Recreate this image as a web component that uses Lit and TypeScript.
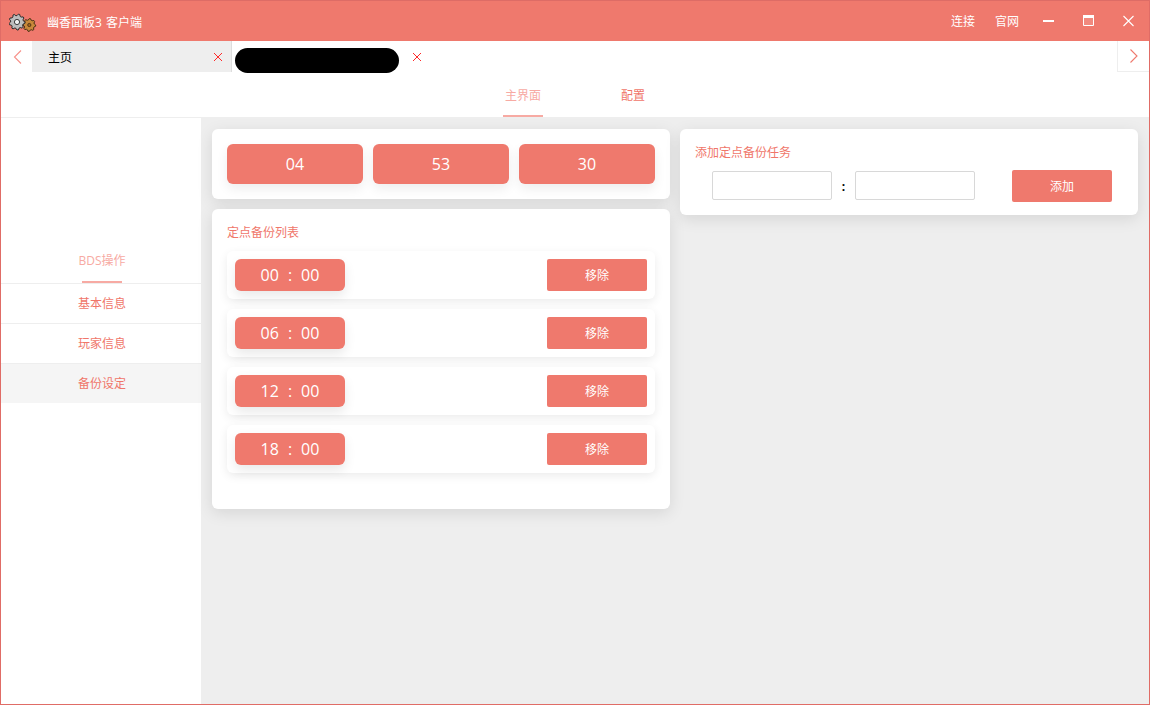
import { LitElement, html, css, svg } from "lit";
import { customElement } from "lit/decorators.js";

const gear = (cx: number, cy: number, r: number, teeth: number, fill: string, dark: string, hole: string, holeR: number) => {
  const pts: string[] = [];
  const n = teeth * 4;
  for (let i = 0; i < n; i++) {
    const a = (i / n) * Math.PI * 2;
    const rr = i % 4 < 2 ? r : r * 0.8;
    pts.push(`${(cx + Math.cos(a) * rr).toFixed(2)},${(cy + Math.sin(a) * rr).toFixed(2)}`);
  }
  return svg`<polygon points=${pts.join(" ")} fill=${fill} stroke=${dark} stroke-width="1"/><circle cx=${cx} cy=${cy} r=${holeR} fill=${hole} stroke=${dark} stroke-width="0.9"/>`;
};

@customElement("app-root")
export class AppRoot extends LitElement {
  static styles = css`
    :host {
      display: block;
      width: 1150px;
      height: 705px;
      font-family: "Open Sans", "Noto Sans CJK SC", sans-serif;
      font-size: 12px;
      color: #f0766a;
      overflow: hidden;
    }
    * { box-sizing: border-box; }
    .win {
      width: 1150px;
      height: 705px;
      border: 1px solid #e06c66;
      border-top: 0;
      display: flex;
      flex-direction: column;
      background: #fff;
    }
    .title {
      height: 41px;
      flex: none;
      background: #ef796d;
      border-top: 1px solid #dd6c66;
      display: flex;
      align-items: center;
      color: #fff;
      padding-left: 8px;
    }
    .logo { width: 30px; height: 24px; flex: none; margin-right: 8px; }
    .app { flex: 1; padding-top: 1px; word-spacing: 1px; }
    .link { margin-right: 20px; }
    .link.last { margin-right: 10px; }
    .wbtn { width: 40px; height: 39px; display: flex; align-items: center; justify-content: center; flex: none; }
    .wbtn svg { display: block; }
    .tabs { height: 31px; flex: none; display: flex; align-items: stretch; }
    .arrow { width: 31px; display: flex; align-items: center; justify-content: center; flex: none; background: #fff; padding-left: 2px; }
    .arrow.right { width: 32px; padding-left: 0; border-left: 1px solid #eee; border-bottom: 1px solid #eee; }
    .tab {
      width: 200px;
      display: flex;
      align-items: center;
      padding: 0 8px 0 16px;
      color: #000;
      justify-content: space-between;
      background: #eee;
      border-right: 1px solid #ddd;
    }
    .tab.plain { background: #fff; border-right: 0; width: 198px; padding: 0 8px 0 3px; }
    .mask { width: 164px; height: 25px; border-radius: 13px; background: #000; display: block; align-self: flex-start; margin-top: 7px; }
    .tabgap { flex: 1; }
    .subnav {
      height: 46px;
      flex: none;
      display: flex;
      justify-content: center;
      gap: 70px;
      padding-left: 6px;
      border-bottom: 1px solid #eee;
    }
    .subitem {
      width: 40px;
      display: flex;
      align-items: center;
      justify-content: center;
      white-space: nowrap;
      padding-top: 2px;
      border-bottom: 2px solid transparent;
    }
    .subitem.on { color: #f7aaa3; border-bottom-color: #f7aaa3; }
    .body { flex: 1; display: flex; min-height: 0; }
    .side { width: 200px; flex: none; background: #fff; padding-top: 124px; display: flex; flex-direction: column; }
    .shead { height: 42px; padding-left: 2px; display: flex; flex-direction: column; align-items: center; justify-content: flex-end; color: #f7aaa3; border-bottom: 1px solid #eee; }
    .shead span { height: 39px; padding-top: 9px; }
    .shead i { display: block; width: 40px; height: 2px; background: #f7aaa3; }
    .sitem { height: 40px; display: flex; align-items: center; justify-content: center; border-bottom: 1px solid #eee; padding: 0 0 2px 2px; }
    .sitem.on { background: #f5f5f5; border-bottom: 0; height: 39px; }
    .main {
      flex: 1;
      background: #eee;
      padding: 11px 10px 10px 11px;
      display: grid;
      grid-template-columns: 458px 458px;
      gap: 10px;
      align-items: start;
    }
    .col { display: flex; flex-direction: column; gap: 10px; }
    .card { background: #fff; border-radius: 6px; box-shadow: 0 4px 16px rgba(0,0,0,0.1); padding: 15px; }
    .clock { display: flex; gap: 10px; height: 70px; }
    .num {
      flex: 1;
      height: 40px;
      background: #ef796d;
      color: #fff;
      border-radius: 6px;
      font-size: 16px;
      display: flex;
      align-items: center;
      justify-content: center;
      box-shadow: 0 5px 12px rgba(0,0,0,0.07);
    }
    .list { height: 300px; }
    .ctitle { height: 18px; line-height: 18px; }
    .rows { display: flex; flex-direction: column; gap: 10px; margin-top: 9px; }
    .row {
      height: 48px;
      padding: 0 8px;
      display: flex;
      align-items: center;
      justify-content: space-between;
      border-radius: 6px;
      background: #fff;
      box-shadow: 0 3px 10px rgba(0,0,0,0.08);
    }
    .time {
      width: 110px;
      height: 32px;
      background: #ef796d;
      color: #fff;
      border-radius: 6px;
      font-size: 16px;
      display: flex;
      align-items: center;
      justify-content: center;
      gap: 9px;
      box-shadow: 0 5px 12px rgba(0,0,0,0.09);
    }
    .btn {
      width: 100px;
      height: 32px;
      background: #ef796d;
      color: #fff;
      border-radius: 2px;
      display: flex;
      align-items: center;
      justify-content: center;
    }
    .add { height: 86px; }
    .form { display: flex; align-items: center; margin-top: 8px; padding-left: 17px; }
    .input { width: 120px; height: 29px; margin-top: -1px; border: 1px solid #d8d8d8; border-radius: 2px; background: #fff; flex: none; }
    .colon { width: 23px; text-align: center; color: #000; font-weight: 700; flex: none; }
    .form .btn { margin-left: 37px; }
  `;

  render() {
    const x = html`<svg width="10" height="10" viewBox="0 0 10 10"><path d="M1 1 9 9M9 1 1 9" stroke="#ff2a2a" stroke-width="1" fill="none"/></svg>`;
    return html`
      <div class="win">
        <div class="title">
          <svg class="logo" viewBox="0 0 30 24">
            ${gear(20.3, 16, 6.4, 8, "#c8883a", "#4a3015", "#a8671f", 1.6)}
            ${gear(8, 13, 8, 9, "#bdbdbd", "#2a2a2a", "#f2f2f2", 2.6)}
          </svg>
          <span class="app">幽香面板3 客户端</span>
          <span class="link">连接</span>
          <span class="link last">官网</span>
          <div class="wbtn">
            <svg width="12" height="12" viewBox="0 0 12 12"><rect x="0" y="5" width="11" height="2" fill="#fff"/></svg>
          </div>
          <div class="wbtn">
            <svg width="12" height="12" viewBox="0 0 12 12"><path d="M.5 .5h10v10h-10z" fill="rgba(255,255,255,.12)" stroke="#fff"/><rect x="0" y="0" width="11" height="3" fill="#fff"/></svg>
          </div>
          <div class="wbtn">
            <svg width="12" height="12" viewBox="0 0 12 12"><path d="M.5 1 10.500 11M10.500 1 .5 11" stroke="#fff" stroke-width="1.100" fill="none"/></svg>
          </div>
        </div>
        <div class="tabs">
          <div class="arrow">
            <svg width="10" height="16" viewBox="0 0 10 16"><path d="M8 1.500 1.500 8 8 14.500" stroke="#f7918a" stroke-width="1.100" fill="none"/></svg>
          </div>
          <div class="tab"><span>主页</span>${x}</div>
          <div class="tab plain"><span class="mask"></span>${x}</div>
          <div class="tabgap"></div>
          <div class="arrow right">
            <svg width="10" height="16" viewBox="0 0 10 16"><path d="M1.500 1.500 8 8 1.500 14.500" stroke="#ef796d" stroke-width="1.100" fill="none"/></svg>
          </div>
        </div>
        <div class="subnav">
          <div class="subitem on">主界面</div>
          <div class="subitem">配置</div>
        </div>
        <div class="body">
          <div class="side">
            <div class="shead"><span>BDS操作</span><i></i></div>
            <div class="sitem">基本信息</div>
            <div class="sitem">玩家信息</div>
            <div class="sitem on">备份设定</div>
          </div>
          <div class="main">
            <div class="col">
              <div class="card clock">
                <div class="num">04</div>
                <div class="num">53</div>
                <div class="num">30</div>
              </div>
              <div class="card list">
                <div class="ctitle">定点备份列表</div>
                <div class="rows">
                  ${["00", "06", "12", "18"].map(
                    (h) => html`<div class="row">
                      <div class="time"><span>${h}</span><span>:</span><span>00</span></div>
                      <div class="btn">移除</div>
                    </div>`
                  )}
                </div>
              </div>
            </div>
            <div class="card add">
              <div class="ctitle">添加定点备份任务</div>
              <div class="form">
                <div class="input"></div>
                <div class="colon">:</div>
                <div class="input"></div>
                <div class="btn">添加</div>
              </div>
            </div>
          </div>
        </div>
      </div>
    `;
  }
}
